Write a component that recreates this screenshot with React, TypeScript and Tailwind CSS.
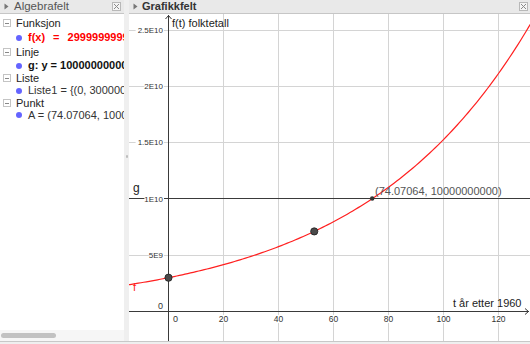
import type { FC } from "react";

const font = { fontFamily: '"Liberation Sans", Arial, sans-serif' };

// graph scale: 20 units of t = 55px, 5E9 = 56.4px
const X0 = 168.5;
const Y0 = 311.5;
const px = (t: number) => X0 + t * 2.75;
const py = (v: number) => Y0 - (v / 5e9) * 56.4;
const k = Math.log(10 / 3) / 74.07064;
const f = (t: number) => 3e9 * Math.exp(k * t);

const curve = (() => {
	const pts: string[] = [];
	for (let t = -16; t <= 140; t += 1) {
		pts.push(`${px(t).toFixed(2)},${py(f(t)).toFixed(2)}`);
	}
	return "M" + pts.join(" L");
})();

const CloseBox: FC = () => (
	<div className="flex h-[9px] w-[9px] items-center justify-center border border-[#b8b8b8] bg-[#f4f4f4]">
		<svg width="7" height="7" viewBox="0 0 7 7">
			<path d="M1 1 L6 6 M6 1 L1 6" stroke="#8a8a8a" strokeWidth="1" />
		</svg>
	</div>
);

const Toggle: FC = () => (
	<svg width="5" height="7" viewBox="0 0 5 7" className="shrink-0">
		<path d="M0.5 0.5 L4.5 3.5 L0.5 6.5 Z" fill="#777" />
	</svg>
);

const Group: FC<{ label: string; h: string }> = ({ label, h }) => (
	<div className={`flex items-center ${h}`}>
		<div className="ml-[3px] mr-[5px] flex h-[8px] w-[8px] items-center justify-center border border-[#c4c4c4]">
			<div className="h-px w-[4px] bg-[#888]" />
		</div>
		<span className="text-[11px] leading-none text-[#222]">{label}</span>
	</div>
);

const Item: FC<{ h: string; children: React.ReactNode }> = ({ h, children }) => (
	<div className={`flex items-center ${h}`}>
		<div className="ml-[16px] mr-[6px] h-[6px] w-[6px] shrink-0 rounded-full bg-[#6464ff]" />
		<span className="text-[11px] leading-none">{children}</span>
	</div>
);

const yLabels = [
	{ v: 2.5e10, t: "2.5E10" },
	{ v: 2e10, t: "2E10" },
	{ v: 1.5e10, t: "1.5E10" },
	{ v: 1e10, t: "1E10" },
	{ v: 5e9, t: "5E9" },
];

const App: FC = () => {
	return (
		<div className="flex h-[344px] w-[530px] flex-col overflow-hidden bg-white" style={font}>
			<div className="flex min-h-0 flex-1">
				{/* Algebra view */}
				<div className="flex w-[124px] flex-col">
					<div className="flex h-[14px] items-center border-b border-[#c6c6c6] bg-[#e9e9e9]">
						<div className="ml-[4px] mr-[5px]">
							<Toggle />
						</div>
						<span className="text-[11.5px] leading-none text-[#555]">Algebrafelt</span>
						<div className="ml-auto mr-[3px]">
							<CloseBox />
						</div>
					</div>
					<div className="flex-1 overflow-hidden whitespace-nowrap pt-[2px]">
						<Group label="Funksjon" h="h-[14px]" />
						<Item h="h-[15px]">
							<span className="font-bold text-[#ff0000]">
								f(x)<span className="mx-[8px]">=</span>2999999999
							</span>
						</Item>
						<Group label="Linje" h="h-[14px]" />
						<Item h="h-[13px]">
							<span className="font-bold text-[#111]">g: y = 10000000000</span>
						</Item>
						<Group label="Liste" h="h-[12px]" />
						<Item h="h-[13px]">
							<span className="text-[#333]">Liste1 = {"{"}(0, 3000000000), (53, 7100000000)</span>
						</Item>
						<Group label="Punkt" h="h-[12px]" />
						<Item h="h-[12px]">
							<span className="text-[#333]">A = (74.07064, 10000000000)</span>
						</Item>
					</div>
					<div className="flex h-[11px] items-center bg-[#f6f6f6]">
						<div className="ml-[1px] h-[5px] w-[55px] rounded-full bg-[#c2c2c2]" />
					</div>
				</div>

				{/* splitter */}
				<div className="flex w-[5px] flex-col items-center bg-[#efefef]">
					<div className="mt-[155px] h-[3px] w-[2px] rounded-full bg-[#bdbdbd]" />
				</div>

				{/* Graphics view */}
				<div className="flex flex-1 flex-col">
					<div className="flex h-[14px] items-center border-b border-[#c6c6c6] bg-[#e9e9e9]">
						<div className="ml-[4px] mr-[4px]">
							<Toggle />
						</div>
						<span className="text-[11px] font-bold leading-none text-[#333]">Grafikkfelt</span>
						<div className="ml-auto mr-[2px]">
							<CloseBox />
						</div>
					</div>
					<svg
						className="block"
						width="401"
						height="327"
						viewBox="129 14 401 327"
						style={font}
					>
						{/* grid */}
						{[1, 2, 3, 4, 5, 6].map((i) => (
							<line key={`v${i}`} x1={X0 + 55 * i} y1={14} x2={X0 + 55 * i} y2={341} stroke="#d4d4d4" />
						))}
						{[1, 3, 4, 5].map((i) => {
							const y = Math.round(Y0 - 56.4 * i) + 0.5;
							return <line key={`h${i}`} x1={129} y1={y} x2={530} y2={y} stroke="#d4d4d4" />;
						})}

						{/* line g */}
						<line x1={129} y1={198.5} x2={530} y2={198.5} stroke="#3a3a3a" />

						{/* axes */}
						<line x1={X0} y1={15} x2={X0} y2={341} stroke="#3a3a3a" />
						<line x1={129} y1={Y0} x2={529} y2={Y0} stroke="#3a3a3a" />
						<path d="M165.5 19 L168.5 15.5 L171.5 19" fill="none" stroke="#3a3a3a" />
						<path d="M525 308.5 L528.5 311.5 L525 314.5" fill="none" stroke="#3a3a3a" />

						{/* y labels */}
						{yLabels.map((l) => {
							const y = py(l.v);
							const w = l.t.length * 4.4;
							return (
								<g key={l.t}>
									<rect x={163 - w - 1} y={y - 4} width={w + 2} height={8} fill="white" />
									<text x={163} y={y + 3} fontSize="8" textAnchor="end" fill="#333">
										{l.t}
									</text>
								</g>
							);
						})}
						<text x={163} y={309} fontSize="9" textAnchor="end" fill="#333">
							0
						</text>

						{/* x labels */}
						<text x={173} y={322} fontSize="9" fill="#333">
							0
						</text>
						{[20, 40, 60, 80, 100, 120].map((t) => (
							<g key={t}>
								<rect x={px(t) - (t >= 100 ? 8 : 5.5)} y={315} width={t >= 100 ? 16 : 11} height={8} fill="white" />
								<text x={px(t)} y={322} fontSize="8.5" textAnchor="middle" fill="#333">
									{t}
								</text>
							</g>
						))}

						{/* curve */}
						<path d={curve} fill="none" stroke="#ff2020" strokeWidth="1.2" />

						{/* points */}
						<circle cx={px(0)} cy={py(f(0))} r="3.6" fill="#4a4a4a" stroke="#1e1e1e" strokeWidth="0.8" />
						<circle cx={px(53)} cy={py(f(53))} r="3.6" fill="#4a4a4a" stroke="#1e1e1e" strokeWidth="0.8" />
						<circle cx={px(74.07064)} cy={198.5} r="2.2" fill="#333" />

						{/* texts */}
						<text x={172} y={27} fontSize="11" fill="#222">
							f(t) folktetall
						</text>
						<text x={453} y={307} fontSize="11" fill="#222">
							t år etter 1960
						</text>
						<text x={133} y={192} fontSize="12" fill="#222">
							g
						</text>
						<text x={133} y={291} fontSize="11" fill="#ff2020">
							f
						</text>
						<text x={375} y={195} fontSize="11" fill="#555">
							(74.07064, 10000000000)
						</text>
					</svg>
				</div>
			</div>
			<div className="h-[3px] border-t border-[#c8c8c8] bg-[#efefef]" />
		</div>
	);
};

export default App;
